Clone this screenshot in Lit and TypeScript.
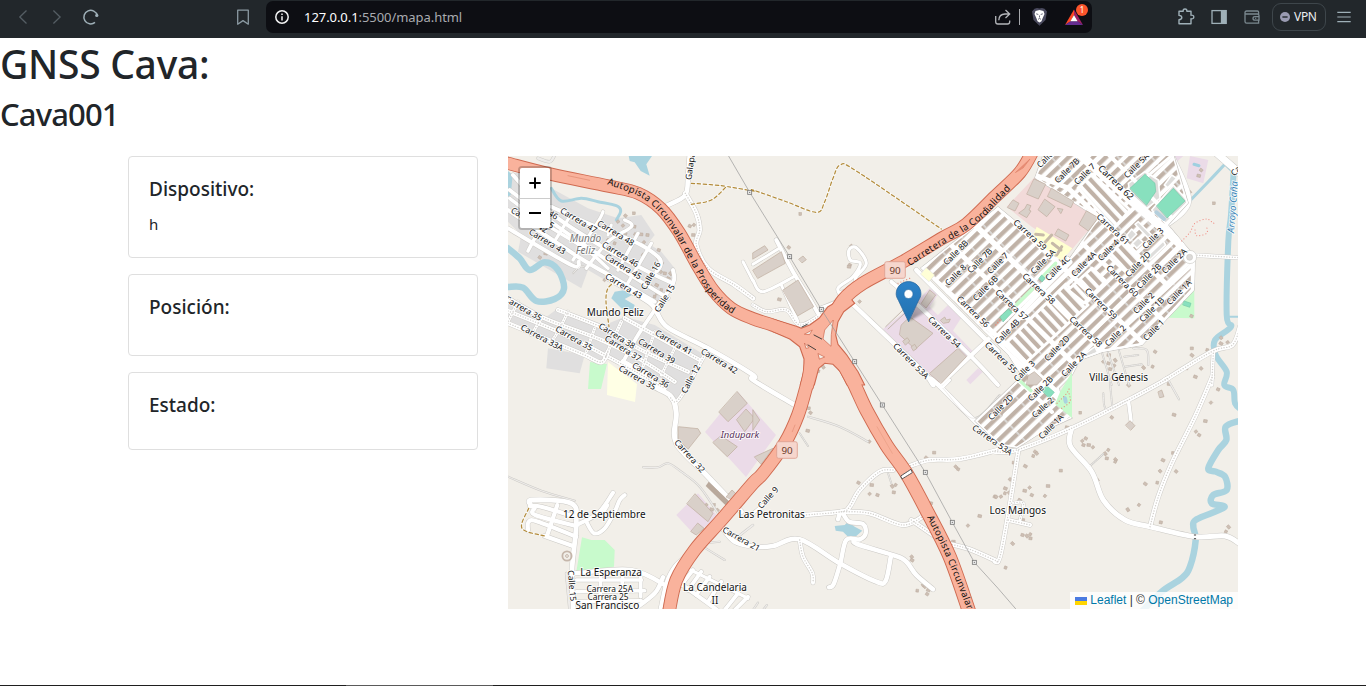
import { LitElement, html, svg, css } from "lit";
import { customElement } from "lit/decorators.js";

type Pt = [number, number];

// Survey sheets: each one has its own origin, three units to a pixel.
const SHEETS: Record<string, Pt> = {
  A: [508, 155],
  B: [753, 155],
  C: [995, 155],
  D: [508, 380],
  E: [753, 380],
  F: [995, 380],
};

// "A 0,25 130,58 B 0,490" -> map points
function pts(src: string): Pt[] {
  let o: Pt = [0, 0];
  let k = 3;
  const out: Pt[] = [];
  for (const t of src.trim().split(/\s+/)) {
    if (t === "P") {
      o = [0, 0];
      k = 1;
    } else if (SHEETS[t]) {
      o = SHEETS[t];
      k = 3;
    } else {
      const [x, y] = t.split(",").map(Number);
      out.push([o[0] + x / k, o[1] + y / k]);
    }
  }
  return out;
}
const f = (n: number) => n.toFixed(1);
const poly = (s: string) => "M" + pts(s).map((p) => `${f(p[0])} ${f(p[1])}`).join("L");
const area = (s: string) => poly(s) + "Z";
function curve(s: string): string {
  const p = pts(s);
  let d = `M${f(p[0][0])} ${f(p[0][1])}`;
  for (let i = 0; i < p.length - 1; i++) {
    const a = p[i - 1] ?? p[i], b = p[i], c = p[i + 1], e = p[i + 2] ?? c;
    d += `C${f(b[0] + (c[0] - a[0]) / 6)} ${f(b[1] + (c[1] - a[1]) / 6)} ${f(c[0] - (e[0] - b[0]) / 6)} ${f(c[1] - (e[1] - b[1]) / 6)} ${f(c[0])} ${f(c[1])}`;
  }
  return d;
}

const AREAS: [string, string][] = [
  ["#e0dfdf", "A 0,60 35,50 130,100 240,160 330,190 400,180 440,240 420,265 460,290 500,340 495,390 450,465 300,380 240,345 220,400 30,290 40,240 0,200"],
  ["#e0dfdf", "A 120,580 230,600 215,655 115,640"],
  ["#e0dfdf", "A 0,430 110,490 150,460 290,510 350,485 440,510 590,600 530,690 480,680 400,640 300,605 270,625 160,580 0,500"],
  ["#e0dfdf", "D 420,0 560,0 500,70 480,45"],
  ["#c8facc", "P 590,362 607,364 601,389 588,389"],
  ["#ffffe5", "P 608,362 637,384 635,402 607,395"],
  ["#ebdbe8", "P 705,432 738,392 776,435 746,477"],
  ["#ebdbe8", "D 505,405 570,340 630,410 560,465"],
  ["#ebdbe8", "B 390,522 475,455 530,400 555,418 530,455 665,595 560,688 430,560"],
  ["#ebdbe8", "B 545,490 585,450 625,488 595,535"],
  ["#ebdbe8", "B 640,675 675,640 690,650 652,688"],
  ["#ebdbe8", "C 525,3 565,3 540,25"],
  ["#ebdbe8", "C 585,3 640,15 625,85 575,70"],
  ["#f2dad9", "C 120,65 312,188 225,290 110,215 35,155"],
  ["#c8facc", "D 222,472 250,480 290,480 320,510 318,560 205,575"],
  ["#c8facc", "C 598,405 598,490 520,488"],
];

const WATER_AREAS = [
  "A 362,3 432,3 415,28 425,62 398,48 380,22 365,18",
  "A 320,410 350,405 372,420 350,432 380,450 375,465 340,460 310,430",
  "E 245,438 275,435 285,425 305,440 328,452 310,468 285,470 270,455 248,452",
  "A 0,48 14,60 8,120 0,125",
];
const RIVERS: [string, number][] = [
  ["A 130,100 160,138 220,130 270,140 325,152 338,168 325,195", 3],
  ["A 0,280 35,310 65,345 110,322 150,345 168,400 140,432 85,438 45,398 0,396", 6.5],
  ["C 716,48 708,180 700,260 695,480 708,515 660,555 662,600 695,650 688,690 F 715,30 720,70 740,90", 6],
  ["C 716,50 690,25", 4],
  ["C 695,22 640,80 582,140", 3],
  ["C 695,485 735,485", 2],
  ["F 735,122 692,140 694,180 670,210 640,265 662,275 690,290 695,330 655,345 650,370 688,382 605,418 595,440 602,480 585,560 560,595 500,635 440,695", 6.5],
];

// [path, width, kind]: r paved, d unpaved, t thin service lane
const ROADS: [string, number, string][] = [
  ["A 130,155 240,205 380,260 450,305 458,330 445,350", 3.9, "r"],
  ["A 15,60 60,110 150,190 300,285 430,355 495,385", 3.9, "r"],
  ["A 5,105 150,215 320,330 480,430", 3.8, "r"],
  ["A 5,130 100,200 230,280 300,340", 3.4, "r"],
  ["A 0,165 210,305 330,375 440,440", 4, "r"],
  ["A 0,220 190,330 212,320", 4, "r"],
  ["A 60,288 80,250", 3.6, "r"],
  ["A 185,185 130,275", 3.2, "r"],
  ["A 285,170 270,200 195,315", 3.2, "r"],
  ["A 350,195 370,215 300,260 235,340", 3.4, "r"],
  ["A 310,210 300,240", 3, "r"],
  ["A 430,265 350,400", 3.4, "r"],
  ["A 390,235 330,345", 3.4, "r"],
  ["A 495,345 495,385 440,465", 4, "r"],
  ["A 195,355 215,335 228,335", 1, "t"],
  ["A 0,430 110,490 280,555 400,615 500,680", 4.2, "d"],
  ["A 150,465 300,525 400,585 540,650", 4.2, "d"],
  ["A 0,468 150,530 290,600 400,660 470,700", 4.2, "d"],
  ["A 0,505 170,575 230,600 280,622 300,590", 4.2, "d"],
  ["A 350,490 440,540 575,615", 4.2, "d"],
  ["A 260,520 235,590", 3, "d"],
  ["A 340,500 290,610", 3.4, "d"],
  ["A 180,470 150,530 130,560", 3, "d"],
  ["A 100,490 70,540", 3, "d"],
  ["A 30,440 0,500", 3, "d"],
  ["A 440,465 390,540 340,630", 3.8, "r"],
  ["A 440,530 400,650", 3, "d"],
  ["A 510,560 460,660", 3, "d"],
  ["A 590,600 540,690 D 505,65 485,50", 3.6, "d"],
  ["A 345,620 420,665 D 440,20 490,50 505,100 505,190 600,290 700,395", 5, "r"],
  ["A 300,370 420,440 445,470 480,518 600,580 735,660 E 0,0 125,75", 4.6, "r"],
  ["A 545,0 540,60 532,120 480,150", 4.6, "r"],
  ["A 532,115 565,175 575,225 565,270 600,340 680,390 735,430", 4.6, "d"],
  ["A 90,10 125,20 140,0", 2.5, "t"],
  ["B 70,255 120,350 175,440 198,480", 4, "r"],
  ["B 0,328 75,282", 3, "r"],
  ["B 0,375 30,410 128,362", 3, "r"],
  ["B 85,390 135,500", 3, "r"],
  ["A 705,320 735,378", 3, "r"],
  ["B 0,450 40,470 100,465 140,510 195,485", 3.6, "d"],
  ["B 200,460 262,432 255,400 300,365 322,325 292,315 288,285 310,278 340,325 310,365 300,400 262,412", 3.2, "r"],
  ["B 415,380 500,455 655,605 735,690", 4, "r"],
  ["B 300,448 500,640 540,690 E 540,0 660,118 735,190 F 30,210", 4.4, "r"],
  ["B 735,525 560,690", 4.2, "r"],
  ["B 490,345 735,590", 4.6, "r"],
  ["E 570,20 590,0", 3, "r"],
  ["E 570,25 660,115 740,45", 1, "t"],
  ["C 530,0 582,138 510,215", 4.6, "r"],
  ["C 660,-10 735,55", 7, "r"],
  ["C 590,300 735,308", 3.8, "d"],
  ["F 0,215 65,210 230,145 400,60 520,-5", 4.4, "d"],
  ["C 510,675 650,590 712,570 735,515", 4.4, "d"],
  ["C 655,595 650,690", 3.6, "d"],
  ["F 465,440 490,350 530,250 600,110 652,-10", 4.4, "d"],
  ["F 400,60 408,122", 3.6, "r"],
  ["F 230,145 226,198 290,275 325,360 390,420 465,440 600,470 690,468 735,492", 5, "r"],
  ["F 70,212 40,400 15,530 0,545", 4.2, "d"],
  ["F 40,420 105,435", 4, "d"],
  ["F 50,370 85,370 75,420", 3, "d"],
  ["F 285,258 325,222", 1, "t"],
  ["F 520,0 552,58", 1.2, "t"],
  ["C 320,590 350,690", 1, "t"],
  ["C 338,590 372,690", 1, "t"],
  ["C 372,588 402,690", 1, "t"],
  ["C 415,580 455,585 460,630", 1.2, "t"],
  ["C 388,605 430,600", 1, "t"],
  ["C 390,635 440,628", 1, "t"],
  ["F 325,40 335,88 400,60", 1, "t"],
  ["F 345,10 352,80", 1, "t"],
  ["E 735,210 620,237 530,240 470,258", 4.4, "d"],
  ["E 420,270 380,275 320,330 290,380 265,395 155,405", 4.4, "d"],
  ["E 265,395 350,400 450,435 512,408", 4.4, "d"],
  ["E 475,420 540,465", 4.4, "d"],
  ["E 590,492 650,508 735,545", 4.4, "d"],
  ["E 255,418 265,395 288,425 330,432 338,460 320,478 280,480 262,550 242,612 228,622", 4.4, "r"],
  ["D 640,440 680,485 740,500 E 60,498 140,478 260,550 370,605 398,602 413,532", 4.6, "r"],
  ["E 140,480 150,530 178,580 180,608", 4, "d"],
  ["E 305,480 312,492 425,527 460,545 490,585 540,628", 4.6, "r"],
  ["E 165,110 260,140 345,185", 1.2, "t"],
  ["E 140,160 165,198", 1, "t"],
  ["E 405,280 415,310", 1, "t"],
  ["D 0,290 100,332 200,362", 1.2, "t"],
  ["D 405,262 450,262 480,250 520,275 575,320 630,400", 1.2, "t"],
  ["D 70,378 72,360 190,370 205,430 192,570 196,690", 4.8, "r"],
  ["D 65,378 100,380 200,410", 4.2, "r"],
  ["D 80,385 82,405 205,438", 4.2, "r"],
  ["D 60,452 62,425 90,425 205,470", 4.2, "r"],
  ["D 110,468 195,498", 4.2, "r"],
  ["D 148,375 118,465", 4.2, "r"],
  ["D 205,435 270,400 315,338", 4, "r"],
  ["D 235,425 258,460 290,445 320,395 335,360 350,345", 4, "r"],
  ["D 300,375 285,400", 3, "r"],
  ["D 200,580 370,570 480,620", 4.4, "r"],
  ["D 205,600 400,600", 3.6, "r"],
  ["D 205,635 410,632", 3.6, "r"],
  ["D 200,665 400,662", 3.6, "r"],
  ["D 278,580 276,687", 3.6, "r"],
  ["D 345,580 340,640", 3.6, "r"],
  ["D 398,585 398,650", 3.6, "r"],
  ["D 380,687 440,640 465,592", 4.4, "r"],
  ["D 175,580 185,690", 2, "t"],
  ["D 540,525 500,560 475,610 455,700", 4, "r"],
  ["D 510,605 600,670 640,700", 4.2, "r"],
  ["D 520,615 555,570", 3.8, "r"],
  ["D 540,630 580,575", 3.8, "r"],
  ["D 565,645 605,590", 3.8, "r"],
  ["D 600,665 640,605", 3.8, "r"],
  ["D 650,690 690,640", 3.8, "r"],
  ["D 680,690 720,650", 3.8, "r"],
  ["D 548,570 720,655", 3.2, "r"],
  ["D 585,490 635,485", 1.2, "t"],
  ["D 585,500 650,540", 1.2, "t"],
  ["D 690,470 735,435", 1.6, "t"],
  ["E 0,400 30,375", 3, "r"],
  ["E 0,690 15,668", 1.2, "t"],
  ["E 30,690 42,675", 1.2, "t"],
];

const TRACKS = [
  "A 550,85 640,92 735,108 B 0,105 100,140 190,172 215,140 240,70 262,30 310,48 565,222",
  "A 550,148 610,135 655,95",
  "A 325,378 300,400 294,440 303,515",
  "D 62,385 42,445 110,468",
];

const GRID_AREA =
  "P 921,268 998,207 1032,235 1070,258 1098,218 1035,178 1045,150 1172,150 1188,203 1168,225 1195,257 1194,290 1142,345 1102,352 1080,360 1072,375 1059,388 1062,402 1072,418 1045,430 1017,448 1000,445 975,421 1022,376 1008,354 985,332";

// Avenues through the street grid
const AVENUES: [string, number][] = [
  ["P 1075,150 1195,257", 9],
  ["P 1035,175 1068,188 1112,230 1165,283", 5],
  ["P 1082,243 1165,322", 4.6],
  ["P 998,207 1101,303 1142,342", 5],
  ["P 975,225 1038,286 1102,350", 5.6],
  ["P 950,244 1012,303 1072,362", 5],
  ["P 921,268 974,315 1060,395", 5.2],
  ["P 985,332 1062,402", 4.6],
  ["P 1018,380 1052,412", 4],
  ["P 1104,150 1172,218", 4],
  ["P 1070,262 1036,296 975,360", 5],
  ["P 1112,230 1022,318", 4],
  ["P 1185,240 1062,362 1005,415", 4],
  ["P 1195,262 1100,350", 3.8],
  ["P 1068,188 1100,156", 4],
  ["P 1193,250 1193,290 1142,345 1102,352 1078,362", 4.4],
  ["P 1143,180 1190,140", 3],
];
// Rows of houses laid across the general direction
const CROSS_ROWS = [
  "P 999,350 1018,370 1088,305 1066,284",
  "P 1068,290 1092,268 1106,281 1084,303",
  "P 1108,256 1122,242 1140,260 1128,274",
  "P 1078,188 1092,174 1130,210 1114,228",
];

const BUILDINGS = [
  "B 0,345 85,290 97,325 15,370",
  "B 0,293 35,272 45,285 0,312",
  "B 90,405 135,375 182,455 135,482",
  "B 138,312 150,303 160,314 148,323",
  "B 445,510 470,485 540,535 487,583 440,540",
  "B 530,655 615,580 640,605 565,685",
  "B 505,445 530,405 548,420 520,458",
  "B 563,495 575,486 580,495 592,492 588,502 572,505",
  "B 450,558 463,548 470,558 458,570",
  "B 475,575 485,568 492,580 482,587",
  "C 118,72 152,88 130,132 96,118",
  "C 170,100 236,140 228,158 158,125",
  "C 150,133 180,155 155,185 130,165",
  "C 90,160 96,148 108,152 102,165 108,168 95,188 72,175",
  "C 55,135 72,145 60,168 38,158",
  "C 275,168 310,188 280,228 252,208 262,190",
  "C 190,222 222,240 212,258 180,240",
  "C 188,160 204,163 198,175",
  "D 688,35 718,70 660,125 633,97",
  "D 715,88 740,115 710,155 686,120",
  "D 640,168 688,200 658,230 615,188",
  "D 512,140 570,146 578,160 540,208 512,180",
  "D 562,342 615,400 600,425 537,372",
  "D 570,430 588,445 565,465 549,455",
  "E 5,230 60,205 25,252",
  "D 655,350 672,330 688,345 675,360",
  "E 0,90 20,120 0,150",
  "F 392,135 405,122 420,137 408,150",
  "F 490,35 500,30 507,50 495,53",
  "C 100,662 118,650 142,672 125,690 95,690",
];
const DARK_BUILDINGS = ["D 602,305 665,365 655,378 593,318"];
const LOTS = [
  "C 395,240 410,222 425,238 405,258",
  "C 412,265 430,248 445,262 425,280",
  "C 455,305 505,258 512,270 465,315",
  "C 420,208 430,200 470,240 460,250",
  "C 530,60 545,70 518,98 508,90",
  "C 265,600 300,575 310,598 275,612",
  "B 545,372 588,405 570,425 530,385",
  "C 400,85 450,50 490,75 495,130 455,160 405,115",
  "C 470,165 535,90 580,140 512,205",
];
const PITCHES = [
  "C 405,100 450,58 480,85 482,110 455,150",
  "C 485,152 535,100 570,138 517,188",
  "C 15,485 40,462 52,472 25,500",
  "C 132,370 140,360 150,370 142,380",
  "C 568,438 588,445 584,457 564,450",
  "F 140,30 155,17 178,37 163,54",
];

const HUTS: Record<string, string> = {
  A: "378,175 352,182 360,200 345,212 382,238 398,238 408,262 452,285 450,310 462,325 470,355 487,355 492,385 447,415 452,440 440,425 430,395 445,390 460,405 335,240 350,235 330,200 95,307 112,295 290,375 545,213 555,240 558,210 570,300 600,345 690,400 418,240 300,255 320,265 395,320 405,300 380,215 458,350 480,370",
  B: "142,177 107,277 78,433 295,273 290,330 287,335 320,440 195,648 210,635",
  C: "657,145 618,45 610,62 585,112 589,483 340,600 325,620 340,625 360,615 358,632 345,642 445,637 473,635 590,580 590,600 637,585 678,548 677,565 575,640 618,640 600,665 698,562 480,590 320,580",
  D: "618,375 628,390 610,388 595,375 665,345",
  E: "168,85 172,98 163,152 349,185 316,308 355,315 350,342 373,345 417,318 428,315 422,337 608,260 616,268 543,218 519,233 535,370 476,530 476,540 493,632 515,620 525,630 510,615 522,642 679,408 645,437 725,350 600,485 602,490",
  F: "256,98 350,112 215,142 262,183 272,175 280,195 294,202 265,195 330,220 340,210 335,235 361,238 361,245 197,272 120,215 115,228 125,220 90,258 56,248 45,298 30,325 18,350 3,350 88,332 104,323 110,345 158,318 150,348 82,465 95,467 106,463 106,475 52,490 32,563 307,300 450,311 487,308 495,273 503,240 534,219 543,274 536,104 603,155 612,165 630,123 648,68 669,28 398,388 432,375 497,427 700,440 693,455 521,12 400,15 30,340 42,338 73,360 85,420",
};

const MOTORWAYS: [string, number][] = [
  ["A -30,18 0,25 130,58 300,93 390,115 460,162 515,235 565,325 615,405 670,460 735,491 B 60,511 140,545 185,610", 12],
  ["C 115,-15 75,52 0,125 B 640,208 570,248 450,320 330,385 270,435 232,500", 12.4],
  ["B 175,620 163,690 E 163,10 135,105 95,190 30,280 D 735,310 640,420 560,510 505,600 482,700", 12.5],
  ["B 265,618 300,680 E 340,90 400,195 460,280 520,390 590,530 650,700", 13],
];
const JUNCTION =
  "B 60,492 130,514 145,520 170,510 200,488 225,455 285,420 305,445 272,470 255,500 248,540 255,568 280,598 315,650 335,690 282,690 262,650 240,628 215,625 197,640 184,690 142,690 152,650 153,612 140,575 110,552 60,530";
const JUNCTION_HOLES = [
  "B 240,496 215,525 210,552 234,574 235,540",
  "B 155,537 178,525 170,538",
  "B 155,565 168,578 160,580",
  "B 196,596 215,606 200,612",
];

const POWER = "A 660,0 725,112 B 110,305 205,463 305,620 E 388,75 517,277 598,427 664,547 735,625 F 65,690";
const PYLONS = "A 725,112 B 110,305 205,463 305,620 E 388,75 517,277 598,427 664,547";

// [text, sheet, centre x, centre y, angle]
const STREETS: [string, string, number, number, number][] = [
  ["Carrera 47", "A", 212, 196, 31], ["Carrera 48", "A", 323, 234, 31], ["Carrera 46", "A", 337, 298, 31],
  ["Carrera 45", "A", 346, 335, 31], ["Carrera 43", "A", 347, 393, 31], ["Carrera 43", "A", 118, 260, 31],
  ["46", "A", 136, 180, 31], ["45", "A", 124, 207, 31], ["44", "A", 102, 218, 31], ["Carrera 42", "A", 64, 195, 31],
  ["Calle 16", "A", 428, 362, -60], ["Calle 15", "A", 470, 430, -58], ["Carrera 35", "A", 46, 460, 30],
  ["Carrera 33A", "A", 102, 548, 28], ["Carrera 35", "A", 198, 550, 30], ["Carrera 38", "A", 327, 543, 32],
  ["Carrera 37", "A", 345, 580, 32], ["Carrera 39", "A", 446, 588, 31], ["Carrera 41", "A", 497, 562, 30],
  ["Carrera 42", "A", 634, 618, 31], ["Carrera 36", "A", 428, 660, 31], ["Carrera 35", "A", 388, 668, 30],
  ["Calle 12", "A", 548, 672, -62], ["Galapa", "A", 547, 34, -82],
  ["Calle 8B", "B", 608, 293, -45], ["Calle 8", "B", 608, 360, -45], ["Calle 7B", "B", 680, 317, -45],
  ["Calle 6B", "B", 697, 400, -45], ["Calle 7", "C", 8, 325, -45], ["Carrera 56", "B", 660, 470, 44],
  ["Carrera 54", "B", 574, 532, 44], ["Carrera 53A", "B", 474, 618, 45], ["Carrera 55", "C", 18, 608, 44],
  ["Calle 7B", "C", 216, 47, -45], ["Calle 7", "C", 269, 57, -45], ["Calle 7B", "C", 163, 0, -45],
  ["Calle 5A", "C", 424, 32, -45], ["Carrera 59", "C", 105, 240, 42], ["Carrera 61", "C", 354, 223, 43],
  ["Calle 3", "C", 474, 250, -45], ["Calle 4", "C", 340, 286, -45], ["Calle 4A", "C", 266, 327, -45],
  ["Calle 5A", "C", 144, 320, -45], ["Calle 4C", "C", 188, 340, -45], ["Calle 2D", "C", 429, 328, -45],
  ["Calle 2B", "C", 462, 363, -45], ["Calle 2A", "C", 538, 318, -45], ["Carrera 60", "C", 382, 378, 45],
  ["Carrera 58", "C", 131, 401, 43], ["Carrera 59", "C", 318, 446, 44], ["Calle 1A", "C", 552, 412, -45],
  ["Calle 2", "C", 446, 444, -45], ["Calle 1B", "C", 470, 464, -45], ["Carrera 57", "C", 50, 450, 43],
  ["Carrera 58", "C", 272, 530, 43], ["Calle 1", "C", 476, 525, -45], ["Calle 2", "C", 361, 542, -45],
  ["Calle 4B", "C", 36, 530, -45], ["Calle 2D", "C", 186, 580, -45], ["Calle 2A", "C", 236, 627, -45],
  ["Calle 3", "C", 88, 648, -45], ["Calle 2B", "F", 136, 26, -45], ["Calle 2", "F", 143, 83, -42],
  ["Calle 2D", "F", 17, 82, -45], ["Calle 1A", "F", 168, 140, -45], ["Carrera 53A", "E", 718, 180, 35],
  ["Ca", "C", 722, 48, -45],
  ["Carrera 32", "D", 545, 228, 48], ["Carrera 21", "D", 700, 477, 29], ["Calle 9", "E", 45, 353, -48],
  ["Calle 15", "D", 192, 617, 85], ["Carrera 25A", "D", 305, 626, 0], ["Carrera 25", "D", 300, 652, 0],
];
const PLACES: [string, string, number, number][] = [
  ["Mundo Feliz", "A", 322, 473], ["Villa Génesis", "C", 371, 666], ["12 de Septiembre", "D", 289, 403],
  ["La Esperanza", "D", 309, 578], ["San Francisco", "D", 298, 677], ["La Candelaria", "D", 621, 621],
  ["II", "D", 621, 660], ["Las Petronitas", "E", 56, 403], ["Los Mangos", "F", 68, 391],
];

@customElement("gnss-map")
class GnssMap extends LitElement {
  static styles = css`
    :host { display: block; position: relative; height: 453px; overflow: hidden; background: #f2efe9; font-family: "Noto Sans", sans-serif; }
    .tiles { display: block; width: 100%; height: 100%; }
    .tiles path { fill: none; stroke-linejoin: round; stroke-linecap: round; }
    .tiles text { fill: #111; text-anchor: middle; paint-order: stroke; stroke: rgba(255, 255, 255, 0.8); stroke-width: 1.8px; stroke-linejoin: round; }
    .street { font-size: 8.4px; }
    .avenue { font-size: 9.2px; }
    .place { font-size: 10px; }
    .tiles .quarter { font-size: 10px; font-style: italic; fill: #777; }
    .tiles .park { font-size: 9.4px; font-style: italic; fill: #5b355c; }
    .tiles .river { font-size: 9.5px; font-style: italic; fill: #3b86b8; }
    .tiles .route { font-size: 9.5px; stroke: none; fill: #111; text-anchor: start; }
    .tiles .shield { font-size: 9.8px; stroke: none; fill: #6a3a2a; }
    .zoom { position: absolute; left: 10px; top: 10px; border: 2px solid rgba(0, 0, 0, 0.2); border-radius: 4px; background-clip: padding-box; }
    .btn { display: flex; align-items: center; justify-content: center; box-sizing: border-box; width: 30px; height: 30px; background: #fff; }
    .btn:first-child { height: 31px; border-bottom: 1px solid #ccc; border-radius: 2px 2px 0 0; }
    .btn:last-child { height: 29px; border-radius: 0 0 2px 2px; }
    .credit { position: absolute; right: 0; bottom: 0; display: flex; align-items: center; height: 17px; padding: 0 5px; background: rgba(255, 255, 255, 0.8); font: 12px/17px "Liberation Sans", sans-serif; color: #333; white-space: pre; }
    .credit a { color: #0078a8; }
    .flag { margin-right: 3px; }
  `;

  private roads() {
    const casing = ROADS.map(([s, w]) => svg`<path d=${curve(s)} stroke="#cbc9c5" stroke-width=${w + 0.9}></path>`);
    const fill = ROADS.map(([s, w, k]) =>
      k === "t"
        ? svg`<path d=${curve(s)} stroke="#eeecea" stroke-width=${w}></path>`
        : svg`<path d=${curve(s)} stroke="#fff" stroke-width=${w}></path>`);
    const dots = ROADS.filter((r) => r[2] === "d").map(
      ([s]) => svg`<path d=${curve(s)} stroke="#d3d1ce" stroke-width="1.4" stroke-dasharray=".1 2.6"></path>`);
    return [casing, fill, dots];
  }

  private grid() {
    return svg`
      <defs>
        <pattern id="rows" width="8.6" height="24" patternUnits="userSpaceOnUse" patternTransform="rotate(46) translate(1 0)">
          <rect width="8.6" height="24" fill="#fff"></rect>
          <rect x="1" y="0" width="4.3" height="24" fill="#c0b2a7"></rect>
          <rect x="1" y="0" width="4.3" height="1.8" fill="#dcdad8"></rect>
        </pattern>
        <pattern id="cross" width="8" height="30" patternUnits="userSpaceOnUse" patternTransform="rotate(-43)">
          <rect width="8" height="30" fill="#fff"></rect>
          <rect x="1" width="4.1" height="30" fill="#c0b2a7"></rect>
        </pattern>
        <clipPath id="town"><path d=${area(GRID_AREA)}></path></clipPath>
      </defs>
      <path d=${area(GRID_AREA)} style="fill:#fff" stroke="#c9c7c3" stroke-width="1.4"></path>
      <g clip-path="url(#town)">
        <path d=${area(GRID_AREA)} style="fill:url(#rows)"></path>
        ${CROSS_ROWS.map((s) => svg`<path d=${area(s)} style="fill:url(#cross)" stroke="#fff" stroke-width="3"></path>`)}
        ${LOTS.map((s) => svg`<path d=${area(s)} style="fill:#dedddb" stroke="#fff" stroke-width="1.6"></path>`)}
        ${AVENUES.map(([s, w]) => svg`<path d=${poly(s)} stroke="#fff" stroke-width=${w}></path>`)}
        <path d=${poly("C 62,452 112,402")} stroke="#c8facc" stroke-width="3.6"></path>
        <path d=${poly("C 140,368 182,325")} stroke="#c8facc" stroke-width="3.4"></path>
        <path d=${area(GRID_AREA)} stroke="#fff" stroke-width="3"></path>
      </g>
      <path d=${area("B 520,338 545,360 528,380 503,358")} style="fill:#ffffd6" stroke="#ddd" stroke-width=".5"></path>
      <path d=${area("C 125,215 232,280 200,318 110,250")} style="fill:#ffffd0"></path>
      <path d=${area("P 1072,372 1072,418 1055,404 1060,392")} style="fill:#c8facc"></path>
      <path d=${poly("F 72,0 108,32")} stroke="#c8facc" stroke-width="3.4"></path>
      <path d=${poly("F 210,55 212,65")} stroke="#aad3df" stroke-width="4"></path>
      <path d=${poly("C 484,172 507,192")} stroke="#b5cfdc" stroke-width="4"></path>
      ${PITCHES.map((s) => svg`<path d=${area(s)} style="fill:#88e0be" stroke="#6fc5a4" stroke-width=".6"></path>`)}
      <circle cx="1190" cy="257" r="6.6" fill="#fff" stroke="#c9c7c3" stroke-width=".6"></circle>
      <circle cx="1189.6" cy="257.3" r="3" fill="#dcdad8" stroke="#c9c7c3" stroke-width=".6"></circle>
    `;
  }

  private trunk() {
    return svg`
      ${MOTORWAYS.map(([s, w]) => svg`<path d=${curve(s)} stroke="#cf6a50" stroke-width=${w + 1.2}></path>`)}
      <path d=${area(JUNCTION)} style="fill:#f9b29c" stroke="#cf6a50" stroke-width="1.1"></path>
      ${MOTORWAYS.map(([s, w]) => svg`<path d=${curve(s)} stroke="#f9b29c" stroke-width=${w - 0.6}></path>`)}
      ${JUNCTION_HOLES.map((s) => svg`<path d=${area(s)} style="fill:#f2efe9" stroke="#cf6a50" stroke-width=".7"></path>`)}
      <path d=${poly("A 180,62 245,76")} stroke="#e08a70" stroke-width=".7"></path>
      <path d=${poly("E 372,140 418,220")} stroke="#e59a82" stroke-width=".6"></path>
      <path d=${poly("E 126,135 118,155")} stroke="#e08a70" stroke-width=".6"></path>
      <path d=${area("C 62,52 105,12 85,38")} style="fill:#e98f77" stroke="#dd7f66" stroke-width=".6"></path>
      <path d=${poly("B 183,540 206,552")} stroke="#333" stroke-width=".9"></path>
      <path d=${poly("B 165,570 188,584")} stroke="#333" stroke-width=".9"></path>
      <path d=${poly("B 147,516 163,508")} stroke="#333" stroke-width=".9"></path>
      <path d=${area("E 443,288 474,268 478,278 447,297")} style="fill:#fff" stroke="#444" stroke-width=".9" stroke-dasharray="1.4 .8"></path>
    `;
  }

  render() {
    const at = (k: string, x: number, y: number): Pt => [SHEETS[k][0] + x / 3, SHEETS[k][1] + y / 3];
    return html`
      <svg class="tiles" viewBox="508 156 730 453" preserveAspectRatio="none">
        ${AREAS.map(([c, s]) => svg`<path d=${area(s)} style="fill:${c}"></path>`)}
        ${WATER_AREAS.map((s) => svg`<path d=${area(s)} style="fill:#aad3df"></path>`)}
        ${RIVERS.map(([s, w]) => svg`<path d=${curve(s)} stroke="#aad3df" stroke-width=${w}></path>`)}
        ${Object.entries(HUTS).map(([k, s]) =>
          pts(`${k} ${s}`).map(([x, y], i) => svg`<rect x=${x - 1.4} y=${y - 1.4} width=${2.6 + (i % 3) * 0.5} height="2.8" fill="#cdbfb4" stroke="#b9a99c" stroke-width=".5" transform="rotate(${(i * 37) % 60} ${x} ${y})"></rect>`))}
        ${this.roads()}
        ${this.grid()}
        ${BUILDINGS.map((s) => svg`<path d=${area(s)} style="fill:#d9d0c9" stroke="#bfae9f" stroke-width=".7"></path>`)}
        ${DARK_BUILDINGS.map((s) => svg`<path d=${area(s)} style="fill:#b9a99c"></path>`)}
        <path d=${poly("B 398,515 450,465")} stroke="#c2b6ad" stroke-width="1"></path>
        <path d=${poly("B 405,522 456,474")} stroke="#c2b6ad" stroke-width="1"></path>
        ${["C 122,238 145,240", "C 150,262 170,240", "C 172,265 198,285", "C 185,300 200,275"].map((s) => svg`<path d=${poly(s)} stroke="#c6b9a8" stroke-width="3"></path>`)}
        <circle cx="567" cy="556" r="4.6" fill="none" stroke="#c5b6aa" stroke-width="1.8"></circle>
        <circle cx="567" cy="556" r="1.4" fill="none" stroke="#c5b6aa"></circle>
        <path d=${curve("C 560,258 585,232 600,205 635,192 655,205 655,200")} stroke="#f08a80" stroke-width="1.1" stroke-dasharray=".1 3"></path>
        <path d=${curve("C 600,225 605,242 635,235 635,215")} stroke="#f08a80" stroke-width="1.1" stroke-dasharray=".1 3"></path>
        <path d=${curve("F 186,70 215,40 225,20")} stroke="#e5907e" stroke-width="1.2" stroke-dasharray=".1 3"></path>
        <path d=${curve("F 200,85 225,65 222,40")} stroke="#e5907e" stroke-width="1.2" stroke-dasharray=".1 3"></path>
        <path d=${curve("C 2,510 15,495")} stroke="#e5907e" stroke-width="1.6" stroke-dasharray=".1 3"></path>
        <path d=${curve("B 435,385 475,368")} stroke="#e5907e" stroke-width="1.2" stroke-dasharray=".1 3"></path>
        <path d=${poly("C 597,28 612,32")} stroke="#9fd0e0" stroke-width="3"></path>
        ${TRACKS.map((s) => svg`<path d=${curve(s)} stroke="#fff" stroke-opacity=".6" stroke-width="2.4"></path><path d=${curve(s)} stroke="#b38b3a" stroke-width="1.2" stroke-dasharray="3.4 2.6"></path>`)}
        ${this.trunk()}
        <path d=${poly(POWER)} stroke="#999" stroke-width=".7"></path>
        ${pts(PYLONS).map(([x, y]) => svg`<rect x=${x - 2} y=${y - 2} width="4" height="4" fill="#eee" stroke="#777" stroke-width=".8"></rect><circle cx=${x} cy=${y} r=".7" fill="#777"></circle>`)}
        <path d=${poly("F 598,465 602,465")} stroke="#444" stroke-width="1"></path>
        <path d=${poly("F 598,476 602,476")} stroke="#444" stroke-width="1"></path>

        ${STREETS.map(([t, k, x, y, a]) => {
          const [px, py] = at(k, x, y);
          return svg`<text class="street" transform="translate(${f(px)} ${f(py)}) rotate(${a})" dy="2.9">${t}</text>`;
        })}
        <text class="avenue" transform="translate(1116 182.5) rotate(44)" dy="3.2">Carrera 62</text>
        ${PLACES.map(([t, k, x, y]) => {
          const [px, py] = at(k, x, y);
          return svg`<text class="place" x=${f(px)} y=${f(py + 3.6)}>${t}</text>`;
        })}
        <text class="quarter" x="585.5" y="242">Mundo</text>
        <text class="quarter" x="585.5" y="253.5">Feliz</text>
        <text class="park" x="740" y="437.5">Indupark</text>
        <text class="river" transform="translate(1232.5 207) rotate(-86)" dy="3.4">Arroyo Caña</text>
        <defs>
          <path id="ap1" d=${curve("A 297,88 390,122 450,168 502,240 552,330 602,414 660,468 735,508")}></path>
          <path id="cord" d=${curve("B 470,334 570,268 640,226 700,180 C 0,150 50,98 80,60")}></path>
          <path id="ap2" d=${curve("E 522,412 575,520 640,680 670,760")}></path>
        </defs>
        <text class="route"><textPath href="#ap1" textLength="187">Autopista Circunvalar de la Prosperidad</textPath></text>
        <text class="route"><textPath href="#cord" textLength="128">Carretera de la Cordialidad</textPath></text>
        <text class="route"><textPath href="#ap2" textLength="101">Autopista Circunvalar</textPath></text>
        ${[[895, 270], [787, 450]].map(([x, y]) => svg`<rect x=${x - 10.3} y=${y - 8.3} width="20.6" height="16.6" rx="2" fill="#f6d6cd" stroke="#dfa393" stroke-width=".9"></rect><text class="shield" x=${x} y=${y + 3.6}>90</text>`)}

        <defs>
          <linearGradient id="pin" x1="0" y1="0" x2="0" y2="1"><stop offset="0" stop-color="#2e82c8"></stop><stop offset="1" stop-color="#2272b0"></stop></linearGradient>
          <linearGradient id="shade" x1="0" y1="1" x2="1" y2="0"><stop offset="0" stop-opacity=".42"></stop><stop offset="1" stop-opacity="0"></stop></linearGradient>
          <filter id="soft"><feGaussianBlur stdDeviation="1.3"></feGaussianBlur></filter>
        </defs>
        <path d="M909 321L917 299Q926 289 934 297Q938 306 928 311Z" style="fill:url(#shade)" filter="url(#soft)"></path>
        <path d="M908.5 321.5L898.5 300.5C896.8 297.5 896.2 296 896.2 293.8C896.2 287 901.7 281.6 908.5 281.6C915.3 281.6 920.9 287 920.9 293.8C920.9 296 920.2 297.5 918.5 300.5Z" style="fill:url(#pin)" stroke="#2968a0" stroke-width=".8"></path>
        <circle cx="908.5" cy="294" r="4.5" fill="#fff" stroke="#2968a0" stroke-width=".6"></circle>
      </svg>
      <div class="zoom">
        <div class="btn"><svg width="12" height="12" viewBox="0 0 12 12"><path d="M6 .5V11.5M.3 6H11.7" stroke="#000" stroke-width="2"></path></svg></div>
        <div class="btn"><svg width="14" height="12" viewBox="0 0 14 12"><path d="M1 5H13" stroke="#000" stroke-width="2"></path></svg></div>
      </div>
      <div class="credit"><svg class="flag" width="12" height="8" viewBox="0 0 12 8"><path fill="#4c7be1" d="M0 0h12v4H0z"></path><path fill="#ffd500" d="M0 4h12v4H0z"></path></svg><a>Leaflet</a> | © <a>OpenStreetMap</a></div>
    `;
  }
}

@customElement("browser-bar")
class BrowserBar extends LitElement {
  static styles = css`
    :host { display: flex; align-items: flex-start; height: 38px; box-sizing: border-box; background: #22272b; font-family: "Noto Sans", sans-serif; }
    svg { display: block; flex: none; fill: none; }
    .nav { display: flex; flex: none; width: 266px; height: 33px; box-sizing: border-box; padding: 0 15px 0 14px; align-items: center; gap: 16px; }
    .mark { margin-left: auto; }
    .url { display: flex; flex: none; align-items: center; width: 826px; height: 32px; margin-top: 1px; box-sizing: border-box; padding: 0 9px 0 8px; border-radius: 7px; background: #0d0e13; font-size: 13px; color: #a9abb0; }
    .address { margin-left: 14px; letter-spacing: -0.06px; }
    .host { color: #fff; }
    .tools { display: flex; align-items: center; margin-left: auto; }
    .rule { width: 1px; height: 16px; margin: 0 11px 0 7px; background: #a5a7ab; }
    .rewards { position: relative; margin-left: 17px; }
    .badge { position: absolute; left: 11px; top: -5px; width: 12px; height: 12px; border-radius: 50%; background: #fb542b; color: #fff; font-size: 8px; line-height: 12px; text-align: center; }
    .side { display: flex; flex: none; align-items: center; height: 33px; margin-left: auto; margin-right: 15px; }
    .side > svg { margin-right: 15px; }
    .side > svg:last-child { margin-right: 0; }
    .vpn { display: flex; align-items: center; gap: 4px; width: 54px; height: 28px; box-sizing: border-box; margin-left: -4px; margin-right: 11px; padding-left: 7px; border: 1px solid #3e464b; border-radius: 9px; color: #eceef0; font-size: 12px; letter-spacing: -0.3px; }
  `;
  render() {
    return html`
      <div class="nav">
        <svg width="18" height="18" viewBox="0 0 18 18" stroke="#555e64" stroke-width="1.3"><path d="M12.5 2.5L5.8 9L12.5 15.5"></path></svg>
        <svg width="18" height="18" viewBox="0 0 18 18" stroke="#555e64" stroke-width="1.3"><path d="M5.4 2.5L12.1 9L5.4 15.5"></path></svg>
        <svg width="18" height="18" viewBox="0 0 18 18" stroke="#9fb0b8" stroke-width="1.5"><path d="M15.3 7.5A6.8 6.8 0 1 0 13 14.4"></path><circle cx="14.8" cy="7.4" r="1.6" fill="#9fb0b8" stroke="none"></circle></svg>
        <svg class="mark" width="16" height="18" viewBox="0 0 16 18" stroke="#8b9aa2" stroke-width="1.3"><path d="M2.7 2.2H13.3V16.2L8 12.6L2.7 16.2Z" stroke-linejoin="round"></path></svg>
      </div>
      <div class="url">
        <svg width="16" height="16" viewBox="0 0 16 16" stroke="#f2f2f3" stroke-width="1.5"><circle cx="8" cy="8" r="6.2"></circle><path d="M8 7.2V11.4M8 4.5V6"></path></svg>
        <span class="address"><span class="host">127.0.0.1</span>:5500/mapa.html</span>
        <div class="tools">
          <svg width="18" height="18" viewBox="0 0 18 18" stroke="#b4b6ba" stroke-width="1.3"><path d="M1.7 8V13.8Q1.7 16 3.9 16H13.5Q15.7 16 15.7 13.8V12.5M4.8 12.3Q5 6.2 11 6H15.5M11.5 2L15.7 6L11.5 10"></path></svg>
          <div class="rule"></div>
          <svg width="17" height="20" viewBox="0 0 17 20"><path d="M3.5 1.8L6 1L8.5 1.4L11 1L13.5 1.8L16 4.5L14.5 13L8.5 18.8L2.5 13L1 4.5Z" fill="#4a4a5e"></path><path d="M4.5 4L8.5 3L12.5 4L13.5 7L11.5 11.5L10.5 14.2L8.5 15.5L6.5 14.2L5.5 11.5L3.5 7Z" fill="#fff"></path><path d="M5.2 6.8L7.3 7.5M11.8 6.8L9.7 7.5M8.5 8.5V10.5M7 12.4L8.5 11.4L10 12.4" stroke="#4a4a5e" stroke-width=".8"></path></svg>
          <div class="rewards">
            <svg width="18" height="17" viewBox="0 0 18 17"><path d="M9 .5L0 16L5.5 12.5L9 6Z" fill="#ff4724"></path><path d="M9 .5L18 16L12.5 12.5L9 6Z" fill="#9e1f63"></path><path d="M0 16H18L12.5 12.2H5.5Z" fill="#662d91"></path><path d="M9 6L12.6 12.3H5.4Z" fill="#fff"></path></svg>
            <span class="badge">1</span>
          </div>
        </div>
      </div>
      <div class="side">
        <svg width="18" height="18" viewBox="0 0 18 18" stroke="#9fb0b8" stroke-width="1.4"><path d="M2 3.2H6.2Q5.9 1 8 1Q10.1 1 9.8 3.2H14V7.2Q16.8 6.9 16.8 9Q16.8 11.1 14 10.8V15.8H2V11.8Q4.8 11.6 4.8 9.6Q4.8 7.6 2 7.4Z" stroke-linejoin="round"></path></svg>
        <svg width="18" height="18" viewBox="0 0 18 18" stroke="#9fb0b8" stroke-width="1.3"><rect x="2" y="2.6" width="14" height="12.8"></rect><path d="M11.5 2.6H16V15.4H11.5Z" fill="#9fb0b8"></path></svg>
        <svg width="18" height="18" viewBox="0 0 18 18" stroke="#7b8990" stroke-width="1.3"><path d="M15.6 6.2V4.2Q15.6 3 14.4 3H3.6Q2 3 2 4.6V13.6Q2 15.2 3.6 15.2H15.6V12.4M2.4 6H14.4Q16 6 16 7.4V12.2H12Q10 12.2 10 10.4Q10 8.6 12 8.6H16M12.2 10.4H13.2"></path></svg>
        <div class="vpn"><svg width="10" height="10" viewBox="0 0 10 10"><circle cx="5" cy="5" r="5" fill="#9a9bb2"></circle><path d="M2.4 5H7.6" stroke="#22272b" stroke-width="1.4"></path></svg>VPN</div>
        <svg width="14" height="14" viewBox="0 0 14 14" stroke="#9fb0b8" stroke-width="1.2"><path d="M.3 2.4H13.7M.3 7H13.7M.3 11.6H13.7"></path></svg>
      </div>
    `;
  }
}

@customElement("app-root")
class AppRoot extends LitElement {
  static styles = css`
    :host { display: flex; flex-direction: column; height: 686px; background: #fff; color: #212529; font-family: "Noto Sans", sans-serif; }
    h1, h2, h5, p { margin: 0; font-weight: 500; white-space: nowrap; }
    h1 { font-size: 39px; line-height: 48px; margin-top: 2px; letter-spacing: -0.3px; }
    h2 { font-size: 31px; line-height: 38px; margin-top: 7px; letter-spacing: -0.85px; }
    .row { display: grid; grid-template-columns: 350px 730px; gap: 30px; width: 1110px; margin: 23px auto 0; }
    .cards { display: flex; flex-direction: column; gap: 16px; }
    .card { box-sizing: border-box; padding: 20px; border: 1px solid #dfdfdf; border-radius: 4px; }
    .device { height: 102px; }
    .position { height: 82px; }
    .state { height: 78px; }
    h5 { font-size: 19px; line-height: 25px; letter-spacing: 0; }
    p { font-size: 15px; line-height: 24px; margin-top: 10px; font-weight: 400; }
    .taskbar { height: 1px; margin-top: auto; display: flex; background: #1f1f1f; }
    .active { width: 147px; margin-left: 346px; background: #5a5a5a; }
  `;
  render() {
    return html`
      <browser-bar></browser-bar>
      <h1>GNSS Cava:</h1>
      <h2>Cava001</h2>
      <div class="row">
        <div class="cards">
          <div class="card device"><h5>Dispositivo:</h5><p>h</p></div>
          <div class="card position"><h5>Posición:</h5></div>
          <div class="card state"><h5>Estado:</h5></div>
        </div>
        <gnss-map></gnss-map>
      </div>
      <div class="taskbar"><div class="active"></div></div>
    `;
  }
}
